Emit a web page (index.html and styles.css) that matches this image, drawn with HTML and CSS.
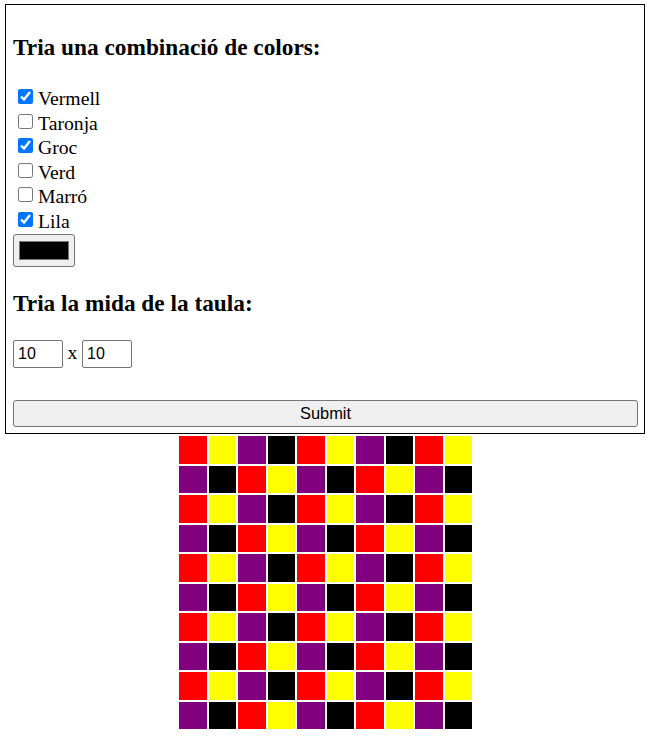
FILE: index.html
```html
<!DOCTYPE html>
<html lang="ca">
<head>
<meta charset="utf-8">
<title>Taula de colors</title>
<link rel="stylesheet" href="styles.css">
</head>
<body>
<form class="panel">
  <h3 class="title">Tria una combinació de colors:</h3>
  <div class="options">
    <label class="option"><input type="checkbox" class="check" checked><span>Vermell</span></label>
    <label class="option"><input type="checkbox" class="check"><span>Taronja</span></label>
    <label class="option"><input type="checkbox" class="check" checked><span>Groc</span></label>
    <label class="option"><input type="checkbox" class="check"><span>Verd</span></label>
    <label class="option"><input type="checkbox" class="check"><span>Marró</span></label>
    <label class="option"><input type="checkbox" class="check" checked><span>Lila</span></label>
  </div>
  <input type="color" class="swatch" value="#000000">
  <h3 class="title title-size">Tria la mida de la taula:</h3>
  <div class="size-row">
    <input type="text" class="num" value="10">
    <span class="times">x</span>
    <input type="text" class="num" value="10">
  </div>
  <button type="button" class="submit">Submit</button>
</form>
<table class="board">
  <tbody id="board"></tbody>
</table>
<script src="script.js"></script>
</body>
</html>
```

FILE: styles.css
```css
html, body {
  margin: 0;
  padding: 0;
  background: #fff;
}

body {
  font-family: "Liberation Serif", "Times New Roman", serif;
  font-size: 19.7px;
  color: #000;
}

.panel {
  margin: 4px 6px 0 5px;
  border: 1px solid #000;
  padding: 29.5px 6px 6px 7px;
}

.title {
  margin: 0;
  font-family: "Liberation Serif", "Times New Roman", serif;
  font-weight: bold;
  font-size: 23.3px;
  line-height: 25px;
}

.options {
  margin-top: 26.5px;
}

.option {
  display: flex;
  align-items: flex-start;
  height: 24.6px;
  line-height: 24.6px;
}

.check {
  width: 15px;
  height: 15px;
  margin: 3px 5px 0 5px;
  flex: none;
}

.swatch {
  display: block;
  box-sizing: border-box;
  width: 62px;
  height: 33px;
  padding: 0;
  margin: 0;
  border: 1px solid #767676;
  border-radius: 3px;
  background: #efefef;
}

.swatch::-webkit-color-swatch-wrapper {
  padding: 6px 5px;
}

.swatch::-webkit-color-swatch {
  border: 1px solid #777;
  border-radius: 0;
}

.title-size {
  margin-top: 24.5px;
}

.size-row {
  display: flex;
  align-items: baseline;
  gap: 4.6px;
  margin-top: 24px;
}

.num {
  box-sizing: border-box;
  width: 50px;
  height: 27.5px;
  margin: 0;
  padding: 1px 4px;
  border: 1px solid #767676;
  border-radius: 2px;
  font-family: "Liberation Sans", Arial, sans-serif;
  font-size: 16px;
  color: #000;
  background: #fff;
}

.times {
  font-size: 19.7px;
}

.submit {
  display: block;
  box-sizing: border-box;
  width: 100%;
  height: 27.5px;
  margin: 32px 0 0;
  padding: 0;
  border: 1px solid #767676;
  border-radius: 3px;
  background: #efefef;
  font-family: "Liberation Sans", Arial, sans-serif;
  font-size: 16.4px;
  color: #000;
}

.board {
  margin: 0 auto;
  border-spacing: 2px;
}

.cell {
  width: 27.5px;
  height: 27.5px;
  padding: 0;
}

.c0 { background: #ff0000; }
.c1 { background: #ffff00; }
.c2 { background: #800080; }
.c3 { background: #000000; }
```

FILE: script.js
```js
(function () {
  var body = document.getElementById('board');
  var n = 10;
  for (var r = 0; r < n; r++) {
    var tr = document.createElement('tr');
    for (var c = 0; c < n; c++) {
      var td = document.createElement('td');
      td.className = 'cell c' + ((r * n + c) % 4);
      tr.appendChild(td);
    }
    body.appendChild(tr);
  }
})();
```
